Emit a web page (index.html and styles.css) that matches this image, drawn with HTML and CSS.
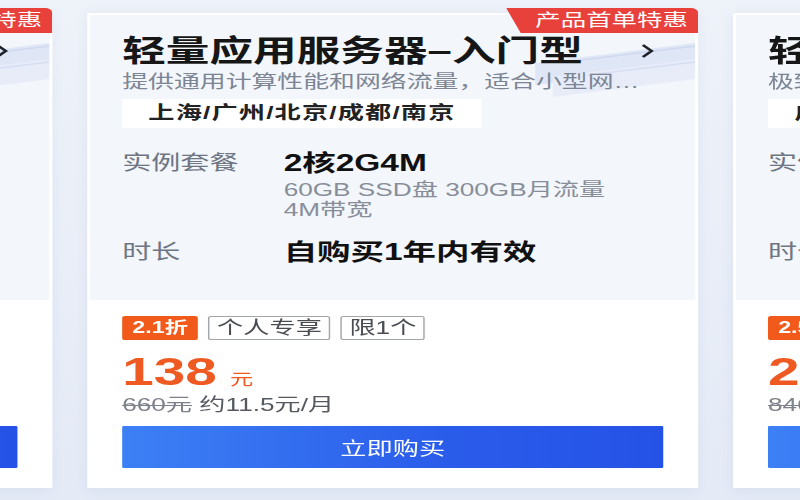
FILE: index.html
```html
<!DOCTYPE html>
<html lang="zh-CN">
<head>
  <meta charset="UTF-8" />
  <meta name="viewport" content="width=device-width, initial-scale=1" />
  <title>轻量应用服务器 - 特惠</title>
  <link rel="stylesheet" href="styles.css">
</head>
<body>
  <div class="stage">
    <div class="cards">

      <!-- left card (mostly off screen) -->
      <div class="card">
        <div class="card-badge">产品首单特惠</div>
        <div class="card-top">
          <svg class="card-deco" viewBox="0 0 124 74">
            <polygon points="14,30 124,10 124,32 14,52" fill="#dfe6f6" />
            <polygon points="26,44 124,26 124,46 26,64" fill="#e7ecf8" />
            <polyline points="40,28 124,13" fill="none" stroke="#cfd9f0" stroke-width="1.5" />
            <polyline points="50,42 124,29" fill="none" stroke="#d6def2" stroke-width="1.5" />
          </svg>
          <div class="card-title">
            <span>轻量应用服务器–通用型</span>
            <svg class="card-arrow" viewBox="0 0 10 16"><path d="M2 2 L8 8 L2 14" /></svg>
          </div>
          <div class="card-desc">面向中小企业和开发者，适用于网站和应用搭建…</div>
          <div class="card-region">上海/广州/北京/成都/南京</div>
          <div class="spec">
            <div class="spec-label">实例套餐</div>
            <div class="spec-value">
              <div class="spec-main">2核2G3M</div>
              <div class="spec-sub">50GB SSD盘 200GB月流量 3M带宽</div>
            </div>
          </div>
          <div class="spec">
            <div class="spec-label">时长</div>
            <div class="spec-value"><div class="spec-main">自购买1年内有效</div></div>
          </div>
        </div>
        <div class="card-bottom">
          <div class="tags">
            <span class="tag tag-off">2.0折</span>
            <span class="tag">个人专享</span>
            <span class="tag">限1个</span>
          </div>
          <div class="price">99<span class="price-unit">元</span></div>
          <div class="price-note"><s>495元</s> 约8.3元/月</div>
          <button class="buy">立即购买</button>
        </div>
      </div>

      <!-- middle card -->
      <div class="card">
        <div class="card-badge">产品首单特惠</div>
        <div class="card-top">
          <svg class="card-deco" viewBox="0 0 124 74">
            <polygon points="14,30 124,10 124,32 14,52" fill="#dfe6f6" />
            <polygon points="26,44 124,26 124,46 26,64" fill="#e7ecf8" />
            <polyline points="40,28 124,13" fill="none" stroke="#cfd9f0" stroke-width="1.5" />
            <polyline points="50,42 124,29" fill="none" stroke="#d6def2" stroke-width="1.5" />
          </svg>
          <div class="card-title">
            <span>轻量应用服务器–入门型</span>
            <svg class="card-arrow" viewBox="0 0 10 16"><path d="M2 2 L8 8 L2 14" /></svg>
          </div>
          <div class="card-desc">提供通用计算性能和网络流量，适合小型网站、博客等场景</div>
          <div class="card-region">上海/广州/北京/成都/南京</div>
          <div class="spec">
            <div class="spec-label">实例套餐</div>
            <div class="spec-value">
              <div class="spec-main">2核2G4M</div>
              <div class="spec-sub">60GB SSD盘 300GB月流量 4M带宽</div>
            </div>
          </div>
          <div class="spec">
            <div class="spec-label">时长</div>
            <div class="spec-value"><div class="spec-main">自购买1年内有效</div></div>
          </div>
        </div>
        <div class="card-bottom">
          <div class="tags">
            <span class="tag tag-off">2.1折</span>
            <span class="tag">个人专享</span>
            <span class="tag">限1个</span>
          </div>
          <div class="price">138<span class="price-unit">元</span></div>
          <div class="price-note"><s>660元</s> 约11.5元/月</div>
          <button class="buy">立即购买</button>
        </div>
      </div>

      <!-- right card (mostly off screen) -->
      <div class="card">
        <div class="card-top">
          <div class="card-title">
            <span>轻量应用服务器–通用型</span>
            <svg class="card-arrow" viewBox="0 0 10 16"><path d="M2 2 L8 8 L2 14" /></svg>
          </div>
          <div class="card-desc">极致性价比，适合企业官网和中型应用等场景</div>
          <div class="card-region">广州/上海/北京</div>
          <div class="spec">
            <div class="spec-label">实例套餐</div>
            <div class="spec-value">
              <div class="spec-main">2核4G5M</div>
              <div class="spec-sub">80GB SSD盘 500GB月流量 5M带宽</div>
            </div>
          </div>
          <div class="spec">
            <div class="spec-label">时长</div>
            <div class="spec-value"><div class="spec-main">自购买1年内有效</div></div>
          </div>
        </div>
        <div class="card-bottom">
          <div class="tags">
            <span class="tag tag-off">2.5折</span>
            <span class="tag">企业专享</span>
          </div>
          <div class="price">212<span class="price-unit">元</span></div>
          <div class="price-note"><s>846元</s> 约17.7元/月</div>
          <button class="buy">立即购买</button>
        </div>
      </div>

    </div>
  </div>
</body>
</html>
```

FILE: styles.css
```css
html, body {
  margin: 0;
  padding: 0;
  height: 500px;
  overflow: hidden;
}
body {
  font-family: "Liberation Sans", "Noto Sans CJK SC", sans-serif;
  background: linear-gradient(180deg, #eef2f9 0%, #e4eaf6 100%);
  color: #1a1a1a;
}

/* the shot is stretched sideways, so the page is laid out narrow and widened */
.stage {
  width: 550px;
  transform: scaleX(1.4545);
  transform-origin: 0 0;
}

.cards {
  display: flex;
  gap: 24px;
  margin-left: -384px;
  padding-top: 13px;
}

.card {
  flex: 0 0 420px;
  position: relative;
  background: #fff;
  padding: 2px;
  box-sizing: border-box;
  height: 475px;
  box-shadow: 0 2px 10px rgba(120, 140, 180, 0.12);
}

.card-badge {
  position: absolute;
  top: -5px;
  right: 0;
  z-index: 2;
  height: 25px;
  line-height: 25px;
  padding: 0 7px 0 20px;
  font-size: 17.5px;
  color: #fff;
  background: #e8403a;
  border-radius: 0 5px 0 0;
  clip-path: polygon(0 0, 100% 0, 100% 100%, 10px 100%);
}

.card-top {
  position: relative;
  background: #f3f6fb;
  padding: 18px 22px 34px;
}
.card-deco {
  position: absolute;
  top: 18px;
  right: 0;
  width: 124px;
  height: 74px;
}

.card-title {
  position: relative;
  display: flex;
  justify-content: space-between;
  align-items: center;
  font-size: 30px;
  line-height: 36px;
  font-weight: bold;
  color: #161616;
}
.card-arrow {
  width: 10px;
  height: 16px;
  margin-right: 6px;
}
.card-arrow path {
  fill: none;
  stroke: #1f2329;
  stroke-width: 2.2;
}

.card-desc {
  position: relative;
  margin-top: 1px;
  font-size: 17.8px;
  line-height: 24px;
  color: #7c8594;
  width: 365px;
  white-space: nowrap;
  overflow: hidden;
  text-overflow: ellipsis;
}

.card-region {
  position: relative;
  display: inline-block;
  margin-top: 5px;
  padding: 0 18px;
  line-height: 29px;
  background: #fff;
  font-size: 18px;
  font-weight: bold;
  letter-spacing: 0.8px;
  color: #222;
}

.spec {
  display: flex;
  margin-top: 21px;
}
.spec + .spec {
  margin-top: 18px;
}
.spec-label {
  flex: 0 0 111px;
  font-size: 20px;
  line-height: 28px;
  color: #6e7583;
}
.spec-main {
  font-size: 23px;
  line-height: 28px;
  font-weight: bold;
  color: #111;
}
.spec-value:first-child .spec-main {
  font-size: 24px;
}
.spec-sub {
  max-width: 236px;
  margin-top: 3px;
  font-size: 18px;
  line-height: 20px;
  color: #878e9a;
}

.card-bottom {
  padding: 16px 22px 18px;
}
.tags {
  display: flex;
  gap: 7px;
}
.tag {
  height: 24px;
  line-height: 22px;
  padding: 0 5px;
  border: 1px solid #a3a6ab;
  border-radius: 2px;
  box-sizing: border-box;
  font-size: 18px;
  color: #4a4d52;
}
.tag-off {
  padding: 0 6px;
  border-color: #f25a1c;
  background: #f25a1c;
  color: #fff;
  font-size: 16px;
  font-weight: bold;
}

.price {
  margin-top: 10px;
  font-size: 39px;
  line-height: 44px;
  font-weight: bold;
  color: #ee5a22;
}
.price-unit {
  margin-left: 9px;
  font-size: 16px;
  line-height: 0;
  font-weight: normal;
}
.price-note {
  font-size: 18px;
  line-height: 22px;
  color: #555a61;
}
.price-note s {
  color: #7d828a;
}

.buy {
  display: block;
  width: 100%;
  height: 42px;
  margin-top: 10px;
  border: none;
  border-radius: 1px;
  background: linear-gradient(90deg, #3d80f5 0%, #2a5cea 60%, #2452e6 100%);
  color: #fff;
  font-family: inherit;
  font-size: 18px;
  cursor: pointer;
}
```
